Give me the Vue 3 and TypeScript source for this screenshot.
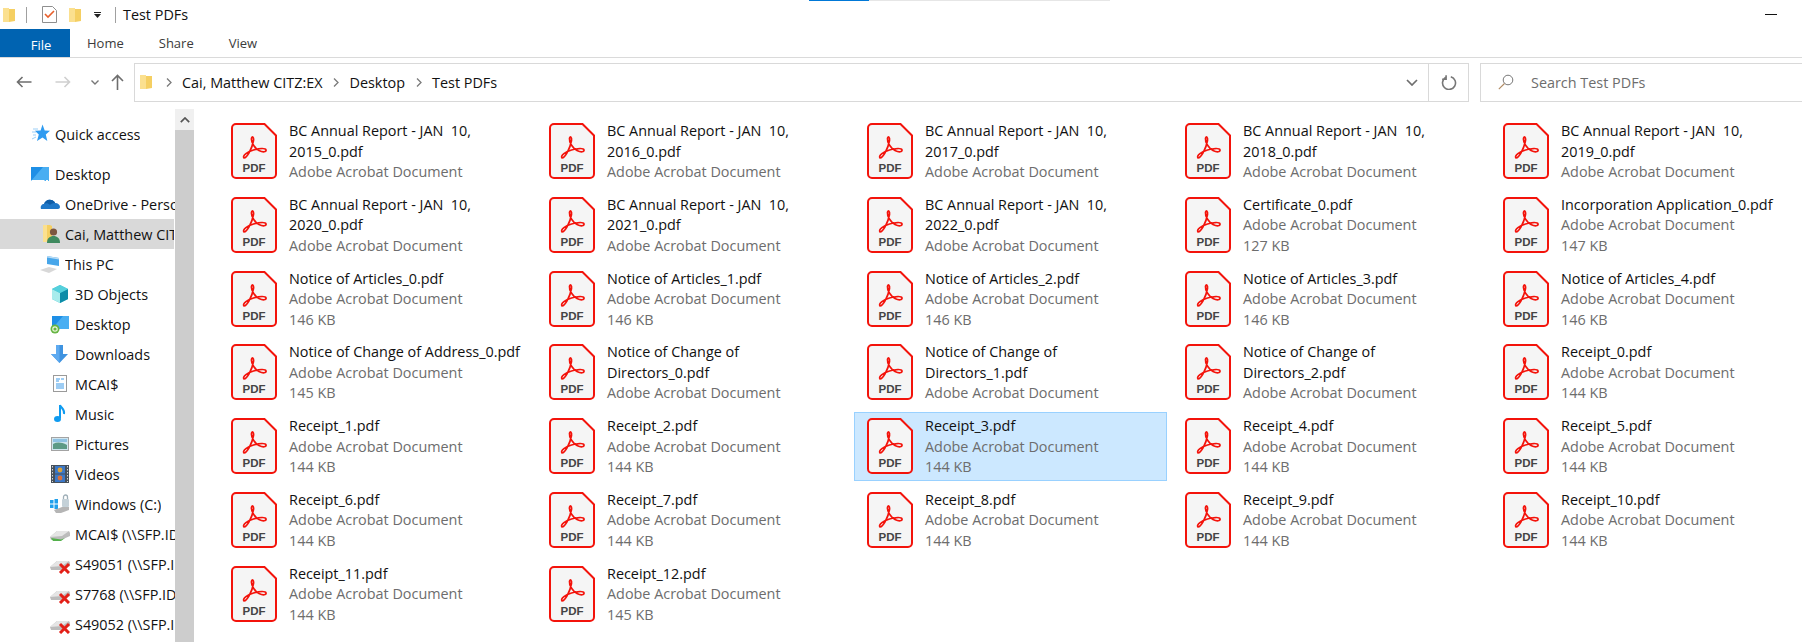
<script setup lang="ts">
interface FileItem {
  name: string;
  size?: string;
  selected?: boolean;
}

interface NavItem {
  label: string;
  depth: number;
  icon: string;
  active?: boolean;
  gapAfter?: boolean;
}

const bcReport = (year: number): FileItem => ({ name: `BC Annual Report - JAN  10,\n${year}_0.pdf` });

const files: FileItem[] = [
  bcReport(2015), bcReport(2016), bcReport(2017), bcReport(2018), bcReport(2019),
  bcReport(2020), bcReport(2021), bcReport(2022),
  { name: 'Certificate_0.pdf', size: '127 KB' },
  { name: 'Incorporation Application_0.pdf', size: '147 KB' },
  { name: 'Notice of Articles_0.pdf', size: '146 KB' },
  { name: 'Notice of Articles_1.pdf', size: '146 KB' },
  { name: 'Notice of Articles_2.pdf', size: '146 KB' },
  { name: 'Notice of Articles_3.pdf', size: '146 KB' },
  { name: 'Notice of Articles_4.pdf', size: '146 KB' },
  { name: 'Notice of Change of Address_0.pdf', size: '145 KB' },
  { name: 'Notice of Change of\nDirectors_0.pdf' },
  { name: 'Notice of Change of\nDirectors_1.pdf' },
  { name: 'Notice of Change of\nDirectors_2.pdf' },
  { name: 'Receipt_0.pdf', size: '144 KB' },
  { name: 'Receipt_1.pdf', size: '144 KB' },
  { name: 'Receipt_2.pdf', size: '144 KB' },
  { name: 'Receipt_3.pdf', size: '144 KB', selected: true },
  { name: 'Receipt_4.pdf', size: '144 KB' },
  { name: 'Receipt_5.pdf', size: '144 KB' },
  { name: 'Receipt_6.pdf', size: '144 KB' },
  { name: 'Receipt_7.pdf', size: '144 KB' },
  { name: 'Receipt_8.pdf', size: '144 KB' },
  { name: 'Receipt_9.pdf', size: '144 KB' },
  { name: 'Receipt_10.pdf', size: '144 KB' },
  { name: 'Receipt_11.pdf', size: '144 KB' },
  { name: 'Receipt_12.pdf', size: '145 KB' },
];

const navItems: NavItem[] = [
  { label: 'Quick access', depth: 0, icon: 'star', gapAfter: true },
  { label: 'Desktop', depth: 0, icon: 'monitor' },
  { label: 'OneDrive - Personal', depth: 1, icon: 'cloud' },
  { label: 'Cai, Matthew CITZ:EX', depth: 1, icon: 'user', active: true },
  { label: 'This PC', depth: 1, icon: 'pc' },
  { label: '3D Objects', depth: 2, icon: 'cube' },
  { label: 'Desktop', depth: 2, icon: 'sync' },
  { label: 'Downloads', depth: 2, icon: 'down' },
  { label: 'MCAI$', depth: 2, icon: 'doc' },
  { label: 'Music', depth: 2, icon: 'music' },
  { label: 'Pictures', depth: 2, icon: 'picture' },
  { label: 'Videos', depth: 2, icon: 'video' },
  { label: 'Windows (C:)', depth: 2, icon: 'windows' },
  { label: 'MCAI$ (\\\\SFP.IDIR.BCGOV)', depth: 2, icon: 'drive' },
  { label: 'S49051 (\\\\SFP.IDIR.BCGOV)', depth: 2, icon: 'driveX' },
  { label: 'S7768 (\\\\SFP.IDIR.BCGOV)', depth: 2, icon: 'driveX' },
  { label: 'S49052 (\\\\SFP.IDIR.BCGOV)', depth: 2, icon: 'driveX' },
];

const crumbs = ['Cai, Matthew CITZ:EX', 'Desktop', 'Test PDFs'];
</script>

<template>
  <div class="explorer">
    <div class="progress"><span class="progress-fill"></span></div>

    <header class="titlebar">
      <svg class="qa-folder" width="12" height="16" viewBox="0 0 12 16">
        <path d="M0 1h5l1 1h6v12l-6 1H0z" fill="#f5cf62" />
        <path d="M0 1h6v14H0z" fill="#fbe08f" />
      </svg>
      <span class="qa-sep"></span>
      <svg class="qa-check" width="15" height="17" viewBox="0 0 15 17">
        <path d="M.5.5h10l4 4v12H.5z" fill="#fff" stroke="#8f8f8f" />
        <path d="M3 8l3 3 6-6" fill="none" stroke="#e8602c" stroke-width="1.6" />
      </svg>
      <svg class="qa-folder2" width="12" height="16" viewBox="0 0 12 16">
        <path d="M0 1h5l1 1h6v12l-6 1H0z" fill="#f5cf62" />
        <path d="M0 1h6v14H0z" fill="#fbe08f" />
      </svg>
      <svg class="qa-drop" width="7" height="6" viewBox="0 0 7 6">
        <path d="M0 0h7v1H0zM0 2h7L3.5 6z" fill="#222" />
      </svg>
      <span class="qa-sep second"></span>
      <span class="title">Test PDFs</span>
      <span class="minimize"></span>
    </header>

    <nav class="tabs">
      <span class="tab file">File</span>
      <span class="tab home">Home</span>
      <span class="tab share">Share</span>
      <span class="tab view">View</span>
    </nav>

    <div class="addressbar">
      <svg class="nav-btn back" width="16" height="12" viewBox="0 0 16 12">
        <path d="M15.5 6H1.5M6.5 1l-5 5 5 5" fill="none" stroke="#6e6e6e" stroke-width="1.6" />
      </svg>
      <svg class="nav-btn forward" width="16" height="12" viewBox="0 0 16 12">
        <path d="M.5 6h14M9.5 1l5 5-5 5" fill="none" stroke="#cfcfcf" stroke-width="1.6" />
      </svg>
      <svg class="nav-btn recent" width="8" height="5" viewBox="0 0 8 5">
        <path d="M.5.5L4 4 7.5.5" fill="none" stroke="#777" stroke-width="1.4" />
      </svg>
      <svg class="nav-btn up" width="13" height="16" viewBox="0 0 13 16">
        <path d="M6.5 16V1.500M1 7l5.500-5.500L12 7" fill="none" stroke="#6e6e6e" stroke-width="1.600" />
      </svg>

      <div class="address">
        <svg class="addr-folder" width="12" height="16" viewBox="0 0 12 16">
          <path d="M0 1h5l1 1h6v12l-6 1H0z" fill="#f5cf62" />
          <path d="M0 1h6v14H0z" fill="#fbe08f" />
        </svg>
        <template v-for="crumb in crumbs" :key="crumb">
          <svg class="crumb-arrow" width="6" height="9" viewBox="0 0 6 9">
            <path d="M1 .5l4 4-4 4" fill="none" stroke="#7a7a7a" stroke-width="1.300" />
          </svg>
          <span class="crumb">{{ crumb }}</span>
        </template>
        <svg class="addr-drop" width="12" height="7" viewBox="0 0 12 7">
          <path d="M1 1l5 5 5-5" fill="none" stroke="#6e6e6e" stroke-width="1.700" />
        </svg>
        <span class="refresh">
          <svg width="16" height="16" viewBox="0 0 16 16">
            <path d="M4.200 2.500a6.500 6.500 0 1 0 5-.6M4.500 .5v4h-4" fill="none" stroke="#777" stroke-width="1.600" transform="translate(.6 .8)" />
          </svg>
        </span>
      </div>

      <div class="search">
        <svg width="16" height="16" viewBox="0 0 16 16">
          <circle cx="10" cy="6" r="4.800" fill="none" stroke="#777" />
          <path d="M6.500 9.500L.8 15.200" stroke="#b08a63" stroke-width="1.100" />
        </svg>
        <span class="search-text">Search Test PDFs</span>
      </div>
    </div>

    <div class="body">
      <aside class="tree">
        <div
          v-for="item in navItems"
          :key="item.label + item.depth"
          class="tree-row"
          :class="['depth-' + item.depth, { active: item.active, spaced: item.gapAfter }]"
        >
          <svg class="tree-icon" width="20" height="20" viewBox="0 0 20 20">
            <template v-if="item.icon === 'star'">
              <path d="M12.500 .5l2.200 6 5.300.300-4.200 3.700 1.500 6.500-4.800-3.500-5.500 3.500 1.800-6.500-4-3.700 5.800-.3z" fill="#2f9bf0" />
              <path d="M3 5h5M2 8h4M3 11h3M2 15l4-2" stroke="#9ccff7" />
            </template>
            <template v-else-if="item.icon === 'monitor'">
              <rect x="1" y="3" width="18" height="14" fill="#1e8fe6" />
              <path d="M1 17L13 3h6v14z" fill="#49aef2" />
              <path d="M1.500 16.500h13M16 16.500h2" stroke="#fff" />
            </template>
            <template v-else-if="item.icon === 'cloud'">
              <path d="M1 15c-1-3 1-5 3-5 1-3 4-5 7-4 2 0 4 2 4 3 3 0 5 2 5 4 0 1-1 2-2 2z" fill="#1f78c8" />
              <path d="M4 10c1-3 4-5 7-4 2 0 4 2 4 3-3 0-4 1-5 2-2-2-4-2-6-1z" fill="#0f5ea8" />
            </template>
            <template v-else-if="item.icon === 'user'">
              <path d="M3 1h7l2 1v15H3z" fill="#f5cf62" />
              <path d="M3 1h4v17H3z" fill="#fbe08f" />
              <circle cx="13.500" cy="8" r="3.600" fill="#7c5640" />
              <path d="M7 19c0-5 3-7 6.500-7s6.500 2 6.500 7z" fill="#3f8a5f" />
            </template>
            <template v-else-if="item.icon === 'pc'">
              <path d="M7 2l12 2v8L7 10z" fill="#47a6ea" />
              <path d="M7 2l12 2v1.500L7 3.500z" fill="#b9dcf5" />
              <path d="M0 16l9-3 8 2-8 4z" fill="#d8d8d8" />
            </template>
            <template v-else-if="item.icon === 'cube'">
              <path d="M10 1l8 4v10l-8 4-8-4V5z" fill="#3fc0cf" />
              <path d="M2 5l8 4v10l-8-4z" fill="#a8ecec" />
              <path d="M10 9l8-4v10l-8 4z" fill="#0d8ca8" />
              <path d="M10 1l8 4-8 4-8-4z" fill="#55d0dc" />
            </template>
            <template v-else-if="item.icon === 'sync'">
              <rect x="2" y="2" width="17" height="13" fill="#1e8fe6" />
              <path d="M2 15L13 2h6v13z" fill="#49aef2" />
              <circle cx="5" cy="15" r="4.500" fill="#67b544" />
              <circle cx="5" cy="15" r="2.200" fill="none" stroke="#e9f6d8" stroke-width="1.200" />
            </template>
            <template v-else-if="item.icon === 'down'">
              <path d="M6 1h7v9h5l-8.500 9L1 10h5z" fill="#3f93e0" />
              <path d="M6 1h3.500v18L1 10h5z" fill="#5eaaf0" />
            </template>
            <template v-else-if="item.icon === 'doc'">
              <rect x="3.500" y="1.500" width="13" height="16" fill="#fff" stroke="#9a9a9a" />
              <path d="M6 5h4M6 7h3M11 5h3M6 10h8M6 12h8M6 14h8" stroke="#3d9be9" />
            </template>
            <template v-else-if="item.icon === 'music'">
              <path d="M10 1v13" stroke="#0f9bf0" stroke-width="2" />
              <ellipse cx="7.500" cy="15" rx="3.500" ry="3" fill="#0f9bf0" />
              <path d="M10 1c1 3 5 4 4 9" fill="none" stroke="#0f9bf0" stroke-width="2" />
            </template>
            <template v-else-if="item.icon === 'picture'">
              <rect x="1.500" y="3.500" width="17" height="13" fill="#cfe5ef" stroke="#a3a3a3" />
              <path d="M3 10c4-2 8-2 14 1v4H3z" fill="#5d9a86" />
              <path d="M3 5h14v3H3z" fill="#8fc2e3" />
            </template>
            <template v-else-if="item.icon === 'video'">
              <rect x="1" y="1" width="18" height="18" fill="#46505a" />
              <rect x="5" y="2" width="10" height="7.500" fill="#3b78c8" />
              <rect x="5" y="10.500" width="10" height="7.500" fill="#3b78c8" />
              <circle cx="10" cy="6" r="2.400" fill="#d9a13a" />
              <circle cx="10" cy="14" r="2.400" fill="#d9703a" />
              <path d="M2.500 2v16M17.500 2v16" stroke="#d8d8d8" stroke-dasharray="1.500 1.500" />
            </template>
            <template v-else-if="item.icon === 'windows'">
              <path d="M0 6h3.500v3.500H0zM4.500 5H8v4.500H4.500zM0 10.500h3.500V14H0zM4.500 10.500H8V15H4.500z" fill="#20a0ec" />
              <path d="M4 16l8-3h7v3l-8 3H6z" fill="#b5b5b5" />
              <rect x="12" y="5" width="7" height="8" rx="1" fill="#c4d1d8" />
              <path d="M13.500 5V3a2 2 0 0 1 4 0v2" fill="none" stroke="#9eaeb7" stroke-width="1.300" />
            </template>
            <template v-else>
              <path d="M0 13l7-6h12l1 2v3l-9 4H1z" fill="#bcbcbc" />
              <path d="M0 13l7-6h12l-7 5z" fill="#e5e5e5" />
              <path v-if="item.icon === 'drive'" d="M1 14l10 1.500 4-1.500-4 3H3z" fill="#53b04b" />
              <path v-else d="M10 10l9 9M19 10l-9 9" stroke="#e32018" stroke-width="3" />
            </template>
          </svg>
          <span class="tree-label">{{ item.label }}</span>
        </div>
      </aside>

      <div class="scrollbar">
        <span class="scroll-up">
          <svg width="10" height="6" viewBox="0 0 10 6">
            <path d="M.8 5.200L5 1l4.200 4.200" fill="none" stroke="#555" stroke-width="1.700" />
          </svg>
        </span>
      </div>

      <main class="files">
        <div v-for="file in files" :key="file.name" class="file" :class="{ selected: file.selected }">
          <svg class="pdf" width="46" height="57" viewBox="0 0 46 57">
            <path
              d="M5 1h28.500L45 12.500V51a4 4 0 0 1-4 4H5a4 4 0 0 1-4-4V5a4 4 0 0 1 4-4z"
              fill="#f5f5f5"
              stroke="#f3130b"
              stroke-width="2"
            />
            <path
              d="M13 35c3 0 8-9 9.500-17.500C23 14 21 12.500 20.500 15.500c-.5 4 3.500 10 7.500 12 4 2 7.500 1.500 7-.5-.5-2-6.500-1.500-12.500 0C17 28.500 11 32.500 13 35z"
              fill="none"
              stroke="#f3130b"
              stroke-width="1.700"
            />
            <text class="pdf-text" x="23" y="49" text-anchor="middle">PDF</text>
          </svg>
          <div class="meta">
            <div class="file-name">{{ file.name }}</div>
            <div class="file-info">Adobe Acrobat Document</div>
            <div v-if="file.size" class="file-info">{{ file.size }}</div>
          </div>
        </div>
      </main>
    </div>
  </div>
</template>

<style>
html,
body {
  margin: 0;
  overflow: hidden;
  background: #fff;
}
</style>

<style scoped>
.explorer {
  position: relative;
  width: 1802px;
  height: 642px;
  overflow: hidden;
  background: #fff;
  color: #111;
  font-family: "Open Sans", "Noto Sans", sans-serif;
  font-size: 14.4px;
}

.progress {
  position: absolute;
  top: 0;
  left: 809px;
  width: 301px;
  height: 1px;
  background: #e6e6e6;
}

.progress-fill {
  display: block;
  width: 60px;
  height: 1px;
  background: #0078d7;
}

.titlebar {
  display: flex;
  align-items: center;
  height: 29px;
}

.qa-folder {
  margin-left: 3px;
}

.qa-sep {
  width: 1px;
  height: 16px;
  margin-left: 11px;
  background: #a0a0a0;
}

.qa-sep.second {
  margin-left: 14px;
}

.qa-check {
  margin-left: 15px;
}

.qa-folder2 {
  margin-left: 12px;
}

.qa-drop {
  margin-left: 13px;
}

.title {
  margin-left: 7px;
}

.minimize {
  width: 12px;
  height: 1px;
  margin-left: auto;
  margin-right: 25px;
  background: #111;
}

.tabs {
  display: flex;
  height: 28px;
  border-bottom: 1px solid #dadada;
  font-size: 13px;
}

.tab {
  display: flex;
  align-items: center;
  color: #3b3b3b;
}

.tab.file {
  justify-content: center;
  width: 70px;
  background: #0063b1;
  color: #fff;
}

.tab.home {
  margin-left: 17px;
}

.tab.share {
  margin-left: 35px;
}

.tab.view {
  margin-left: 35px;
}

.addressbar {
  display: flex;
  align-items: center;
  height: 52px;
  padding-bottom: 4px;
  box-sizing: border-box;
}

.nav-btn.back {
  margin-left: 16px;
}

.nav-btn.forward {
  margin-left: 23px;
}

.nav-btn.recent {
  margin-left: 20px;
}

.nav-btn.up {
  margin-left: 12px;
}

.address {
  display: flex;
  flex: none;
  align-items: center;
  width: 1335px;
  height: 39px;
  margin-left: 10px;
  box-sizing: border-box;
  border: 1px solid #d9d9d9;
  padding-left: 5px;
}

.addr-folder {
  margin-right: 3px;
}

.crumb-arrow {
  margin: 0 10px 0 11px;
}

.addr-drop {
  margin-left: auto;
  margin-right: 10px;
}

.refresh {
  display: flex;
  align-items: center;
  justify-content: center;
  width: 39px;
  height: 100%;
  border-left: 1px solid #d9d9d9;
}

.search {
  display: flex;
  flex: 1;
  align-items: center;
  height: 39px;
  margin-left: 11px;
  margin-right: -4px;
  box-sizing: border-box;
  border: 1px solid #d9d9d9;
  padding-left: 17px;
  color: #6d6d6d;
}

.search-text {
  margin-left: 17px;
}

.body {
  display: flex;
  height: 532px;
}

.tree {
  flex: none;
  width: 175px;
  padding-top: 9px;
  overflow: hidden;
}

.tree-row {
  display: flex;
  align-items: center;
  height: 30px;
  white-space: nowrap;
  overflow: hidden;
}

.tree-row.spaced {
  margin-bottom: 10px;
}

.tree-row.active {
  background: #d9d9d9;
  margin-right: 1px;
}

.depth-0 {
  padding-left: 30px;
}

.depth-1 {
  padding-left: 40px;
}

.depth-2 {
  padding-left: 50px;
}

.tree-icon {
  flex: none;
  margin-right: 5px;
}

.tree-label {
  min-width: 0;
  overflow: hidden;
}

.scrollbar {
  flex: none;
  width: 19px;
  margin-top: -1px;
  background: #cdcdcd;
}

.scroll-up {
  display: flex;
  align-items: center;
  justify-content: center;
  height: 21px;
  background: #f0f0f0;
}

.files {
  display: grid;
  grid-template-columns: repeat(5, 313px);
  grid-auto-rows: 68.75px;
  column-gap: 5px;
  row-gap: 5px;
  padding: 7px 0 0 24px;
  align-content: start;
}

.file {
  display: flex;
  box-sizing: border-box;
  padding: 3px 0 0 12px;
  border: 1px solid transparent;
}

.file.selected {
  background: #cce8ff;
  border-color: #99d1ff;
}

.pdf {
  flex: none;
  margin-top: 2px;
}

.pdf-text {
  font-family: "Liberation Sans", sans-serif;
  font-size: 11.500px;
  font-weight: 700;
  fill: #444;
}

.meta {
  margin-left: 12px;
  line-height: 20.500px;
}

.file-name {
  white-space: pre;
}

.file-info {
  color: #6d6d6d;
  white-space: nowrap;
}
</style>
